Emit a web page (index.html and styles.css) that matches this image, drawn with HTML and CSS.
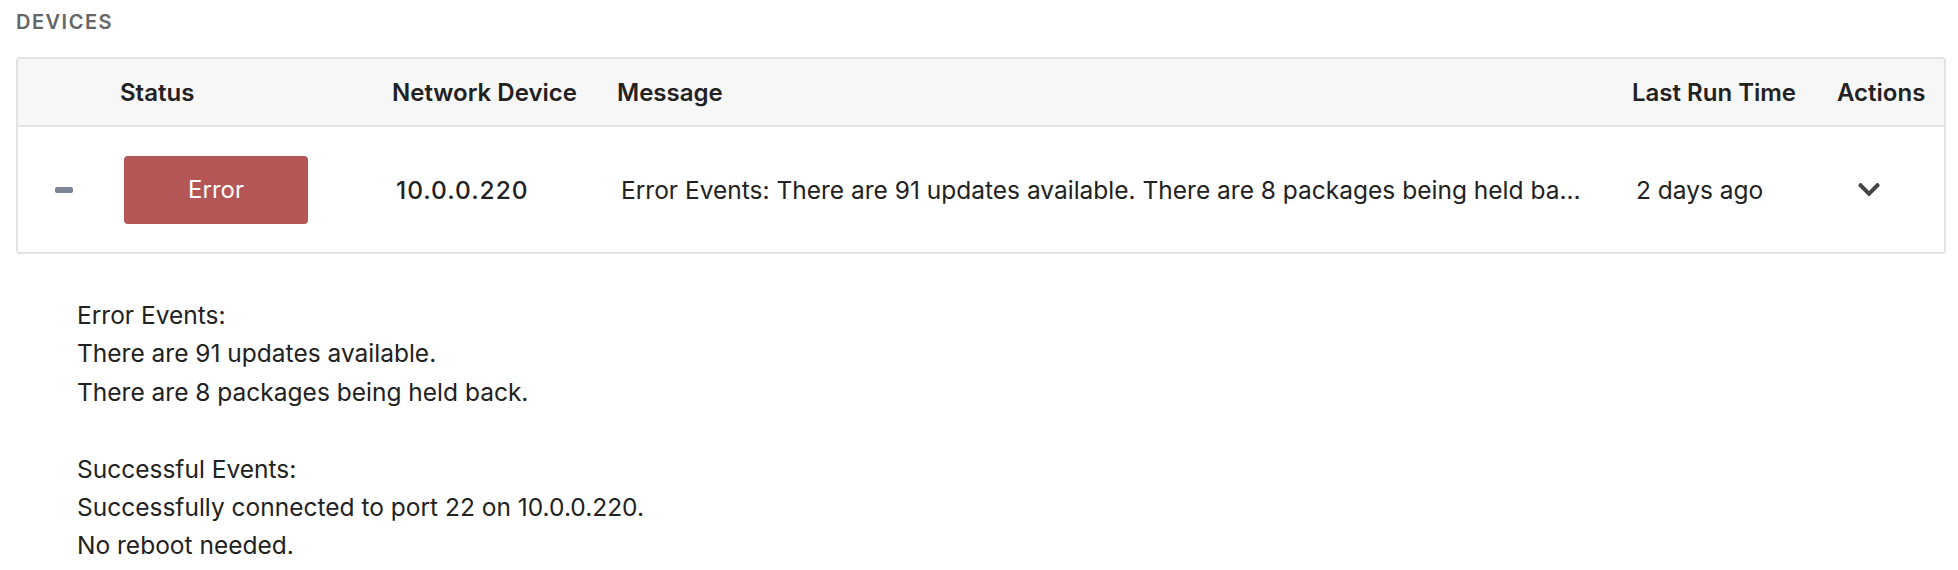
FILE: index.html
```html
<!DOCTYPE html>
<html lang="en">
<head>
    <meta charset="UTF-8">
    <meta name="viewport" content="width=device-width, initial-scale=1.0">
    <title>Devices</title>
    <link rel="stylesheet" href="styles.css">
</head>
<body>

    <h2 class="section-title">DEVICES</h2>

    <table class="devices-table">
        <colgroup>
            <col class="col-toggle">
            <col class="col-status">
            <col class="col-device">
            <col class="col-message">
            <col class="col-time">
            <col class="col-actions">
        </colgroup>
        <thead>
            <tr>
                <th></th>
                <th>Status</th>
                <th>Network Device</th>
                <th>Message</th>
                <th>Last Run Time</th>
                <th>Actions</th>
            </tr>
        </thead>
        <tbody>
            <tr>
                <td class="toggle-cell"><span class="minus-icon"></span></td>
                <td><span class="status-badge">Error</span></td>
                <td class="device-name">10.0.0.220</td>
                <td>Error Events: There are 91 updates available. There are 8 packages being held ba...</td>
                <td>2 days ago</td>
                <td>
                    <button class="actions-btn" type="button">
                        <svg width="22" height="13" viewBox="5 123 438 266"><path d="M207.029 381.476L12.686 187.132c-9.373-9.373-9.373-24.569 0-33.941l22.667-22.667c9.357-9.357 24.522-9.375 33.901-.04L224 284.505l154.745-154.021c9.379-9.335 24.544-9.317 33.901.04l22.667 22.667c9.373 9.373 9.373 24.569 0 33.941L240.971 381.476c-9.373 9.372-24.569 9.372-33.942 0z"/></svg>
                    </button>
                </td>
            </tr>
        </tbody>
    </table>

    <div class="device-details">
        Error Events:<br>
        There are 91 updates available.<br>
        There are 8 packages being held back.<br>
        <br>
        Successful Events:<br>
        Successfully connected to port 22 on 10.0.0.220.<br>
        No reboot needed.
    </div>

</body>
</html>
```

FILE: styles.css
```css
body {
    font-family: Inter, "Open Sans", sans-serif;
    color: #222;
    background-color: #fff;
    margin: 0;
    padding: 10px 12px 0 16px;
}

.section-title {
    margin: 0 0 23px;
    font-size: 20px;
    line-height: 24px;
    font-weight: 600;
    letter-spacing: 1.5px;
    color: #666;
}

.devices-table {
    width: 100%;
    table-layout: fixed;
    border-collapse: separate;
    border-spacing: 0;
    border: 2px solid #e3e3e3;
    border-radius: 4px;
    font-size: 24.5px;
}

.col-toggle { width: 86px; }
.col-status { width: 272px; }
.col-device { width: 225px; }
.col-message { width: 1015px; }
.col-time { width: 205px; }
.col-actions { width: 123px; }

.devices-table th {
    height: 66px;
    padding: 0 0 0 16px;
    text-align: left;
    font-size: 24px;
    font-weight: 600;
    background-color: #f7f7f7;
    border-bottom: 2px solid #e3e3e3;
    white-space: nowrap;
}

.devices-table td {
    height: 125px;
    padding: 0 0 0 20px;
    vertical-align: middle;
    white-space: nowrap;
    overflow: hidden;
}

.devices-table td.toggle-cell {
    padding-left: 37px;
}

.minus-icon {
    display: block;
    width: 18px;
    height: 6px;
    border-radius: 2px;
    background-color: #7b8493;
}

.status-badge {
    display: flex;
    align-items: center;
    justify-content: center;
    width: 184px;
    height: 68px;
    border-radius: 4px;
    background-color: #b35655;
    color: #fff;
    font-size: 24px;
}

.device-name {
    font-weight: 500;
    letter-spacing: 1px;
}

.actions-btn {
    display: block;
    margin-left: 17px;
    padding: 0;
    border: none;
    background: none;
    cursor: pointer;
}

.actions-btn svg {
    display: block;
    fill: #444;
}

.device-details {
    margin-top: 42px;
    padding-left: 61px;
    font-size: 24.5px;
    line-height: 38.4px;
}
```
